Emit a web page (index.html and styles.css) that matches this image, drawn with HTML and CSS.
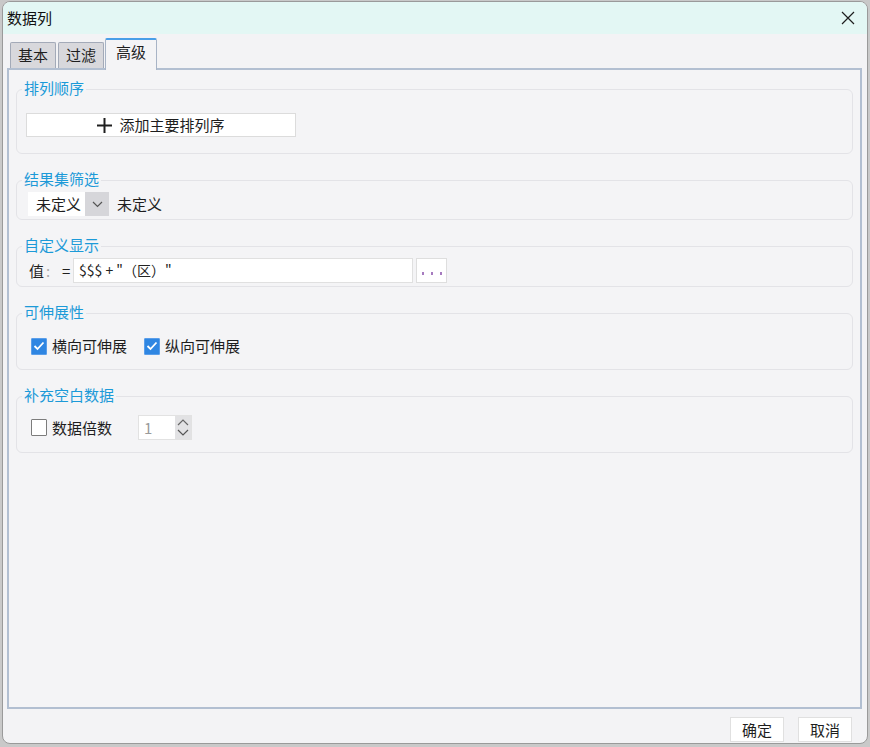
FILE: index.html
```html
<!DOCTYPE html>
<html lang="zh">
<head>
<meta charset="utf-8">
<title>数据列</title>
<link rel="stylesheet" href="styles.css">
</head>
<body>
<div class="window">
  <div class="titlebar">
    <span class="title">数据列</span>
    <svg class="close" width="14" height="14" viewBox="0 0 14 14"><path d="M1 1 L13 13 M13 1 L1 13" stroke="#1e1e1e" stroke-width="1.2" fill="none"/></svg>
  </div>
  <div class="body">
    <div class="tabs">
      <div class="tab t1">基本</div>
      <div class="tab t2">过滤</div>
      <div class="tab active">高级</div>
    </div>
    <div class="panel">
      <div class="group g1">
        <div class="gtitle">排列顺序</div>
        <div class="addbtn">
          <svg width="15" height="15" viewBox="0 0 15 15"><path d="M7.5 0 V15 M0 7.5 H15" stroke="#1e1e1e" stroke-width="2" fill="none"/></svg>
          <span>添加主要排列序</span>
        </div>
      </div>
      <div class="group g2">
        <div class="gtitle">结果集筛选</div>
        <div class="row">
          <div class="combo">
            <span class="combo-text">未定义</span>
            <span class="combo-arrow"><svg width="11" height="7" viewBox="0 0 11 7"><path d="M1 1 L5.5 5.5 L10 1" stroke="#555" stroke-width="1.2" fill="none"/></svg></span>
          </div>
          <span class="combo-label">未定义</span>
        </div>
      </div>
      <div class="group g3">
        <div class="gtitle">自定义显示</div>
        <div class="row valrow">
          <span class="vlabel">值<span class="colon">:</span></span>
          <span class="eq">=</span>
          <div class="vinput">$$$ + "（区）"</div>
          <div class="dots"><span></span><span></span><span></span></div>
        </div>
      </div>
      <div class="group g4">
        <div class="gtitle">可伸展性</div>
        <div class="row checks">
          <label class="check"><span class="box checked"><svg width="12" height="10" viewBox="0 0 12 10"><path d="M1.5 5 L4.5 8 L10.5 1.5" stroke="#fff" stroke-width="1.8" fill="none"/></svg></span>横向可伸展</label>
          <label class="check"><span class="box checked"><svg width="12" height="10" viewBox="0 0 12 10"><path d="M1.5 5 L4.5 8 L10.5 1.5" stroke="#fff" stroke-width="1.8" fill="none"/></svg></span>纵向可伸展</label>
        </div>
      </div>
      <div class="group g5">
        <div class="gtitle">补充空白数据</div>
        <div class="row">
          <label class="check"><span class="box"></span>数据倍数</label>
          <div class="spinner">
            <span class="spin-val">1</span>
            <span class="spin-arrows">
              <svg width="12" height="7" viewBox="0 0 12 7"><path d="M1 6 L6 1 L11 6" stroke="#666" stroke-width="1.2" fill="none"/></svg>
              <svg width="12" height="7" viewBox="0 0 12 7"><path d="M1 1 L6 6 L11 1" stroke="#555" stroke-width="1.2" fill="none"/></svg>
            </span>
          </div>
        </div>
      </div>
    </div>
    <div class="footer">
      <div class="btn">确定</div>
      <div class="btn">取消</div>
    </div>
  </div>
</div>
</body>
</html>
```

FILE: styles.css
```css
* { box-sizing: border-box; }
html, body { margin: 0; padding: 0; }
body {
  background: #c9c9c9;
  width: 870px;
  height: 747px;
  overflow: hidden;
  font-family: "Noto Sans CJK SC", "Noto Sans", "Liberation Sans", sans-serif;
  font-size: 15px;
  color: #1e1e1e;
}
.window {
  margin: 1px 0 0 2px;
  width: 866px;
  height: 743px;
  border: 1px solid #9a9a9a;
  border-radius: 8px;
  overflow: hidden;
  background: #f3f3f5;
  display: flex;
  flex-direction: column;
}
.titlebar {
  height: 32px;
  background: #e3f7f4;
  display: flex;
  align-items: center;
  justify-content: space-between;
  padding: 0 12px 0 4px;
  flex: none;
}
.title { font-size: 15px; line-height: 20px; color: #111; }
.close { display: block; }
.body {
  flex: 1;
  display: flex;
  flex-direction: column;
  padding: 0 5px 0 4px;
}
.tabs {
  margin-top: 4px;
  height: 30px;
  display: flex;
  align-items: flex-end;
  padding-left: 3px;
  position: relative;
  z-index: 2;
}
.tab {
  height: 26px;
  width: 46px;
  background: #d8d8dc;
  border: 1px solid #a3aab8;
  border-bottom: none;
  border-radius: 2px 2px 0 0;
  text-align: center;
  line-height: 24px;
  font-size: 15px;
  color: #1e1e1e;
}
.t1 { margin-right: 2px; }
.t2 { margin-right: 1px; }
.tab.active {
  width: 52px;
  height: 32px;
  margin-bottom: -2px;
  background: #f4f4f6;
  border-color: #a8b4c6;
  border-top: 2px solid #4a9ee8;
  line-height: 24px;
  padding-bottom: 4px;
}
.panel {
  height: 641px;
  border: 2px solid #b2bfd1;
  background: #f4f4f6;
  padding: 19px 7px 0 7px;
  position: relative;
  z-index: 1;
}
.group {
  border: 1px solid #e3e3e7;
  border-radius: 6px;
  display: flex;
  flex-direction: column;
  align-items: flex-start;
}
.group + .group { margin-top: 26px; }
.gtitle {
  margin: -12px 0 0 5px;
  padding: 0 2px;
  line-height: 20px;
  background: #f4f4f6;
  color: #1c9ad8;
  font-size: 15px;
}
.row { display: flex; align-items: center; }
.g1 { padding-bottom: 16px; }
.addbtn {
  margin: 15px 0 0 9px;
  width: 270px;
  height: 24px;
  background: #fff;
  border: 1px solid #dcdcdc;
  display: flex;
  align-items: center;
  justify-content: center;
  gap: 7px;
  line-height: 20px;
}
.addbtn svg { display: block; }
.g2 { padding-bottom: 3px; }
.g2 .row { margin: 3px 0 0 11px; }
.combo {
  width: 81px;
  height: 24px;
  display: flex;
  background: #fff;
}
.combo-text { width: 57px; padding-left: 8px; line-height: 24px; }
.combo-arrow {
  width: 24px;
  background: #d6d6da;
  display: flex;
  align-items: center;
  justify-content: center;
}
.combo-label { margin-left: 8px; line-height: 20px; }
.g3 { padding-bottom: 3px; }
.valrow { margin: 3px 0 0 12px; }
.vlabel { width: 33px; line-height: 20px; }
.colon { color: #aaa; margin-left: 2px; }
.eq { width: 11px; line-height: 20px; }
.vinput {
  width: 340px;
  height: 25px;
  background: #fff;
  border: 1px solid #e0e0e0;
  padding-left: 5px;
  line-height: 22px;
  font-size: 14px;
  color: #222;
  white-space: pre;
}
.dots {
  margin-left: 3px;
  width: 31px;
  height: 25px;
  background: #fff;
  border: 1px solid #dedede;
  display: flex;
  align-items: flex-end;
  justify-content: center;
  gap: 7px;
  padding-bottom: 7px;
}
.dots span { width: 2px; height: 3px; background: #a67bbf; }
.g4 { padding-bottom: 13px; }
.checks { margin: 14px 0 0 14px; height: 20px; }
.check { display: flex; align-items: center; line-height: 20px; margin-right: 17px; }
.box {
  width: 16px;
  height: 17px;
  border: 1px solid #7c7c7c;
  background: #fff;
  border-radius: 1px;
  margin-right: 5px;
  display: flex;
  align-items: center;
  justify-content: center;
}
.box.checked { background: #2f86e2; border-color: #5a9eea; }
.g5 { padding-bottom: 12px; }
.g5 .row { margin: 10px 0 0 14px; }
.g5 .check { margin-right: 26px; }
.spinner {
  width: 54px;
  height: 25px;
  display: flex;
  border: 1px solid #e2e2e2;
  background: #fff;
}
.spin-val { width: 36px; padding-left: 5px; line-height: 23px; color: #9a9a9a; }
.spin-arrows {
  flex: 1;
  background: #e2e2e4;
  display: flex;
  flex-direction: column;
  align-items: center;
  justify-content: center;
  gap: 3px;
}
.spin-arrows svg { display: block; }
.footer {
  display: flex;
  justify-content: flex-end;
  gap: 14px;
  padding: 8px 10px 0 0;
}
.btn {
  width: 54px;
  height: 25px;
  background: #fff;
  border: 1px solid #e0e0e0;
  text-align: center;
  line-height: 23px;
}
```
